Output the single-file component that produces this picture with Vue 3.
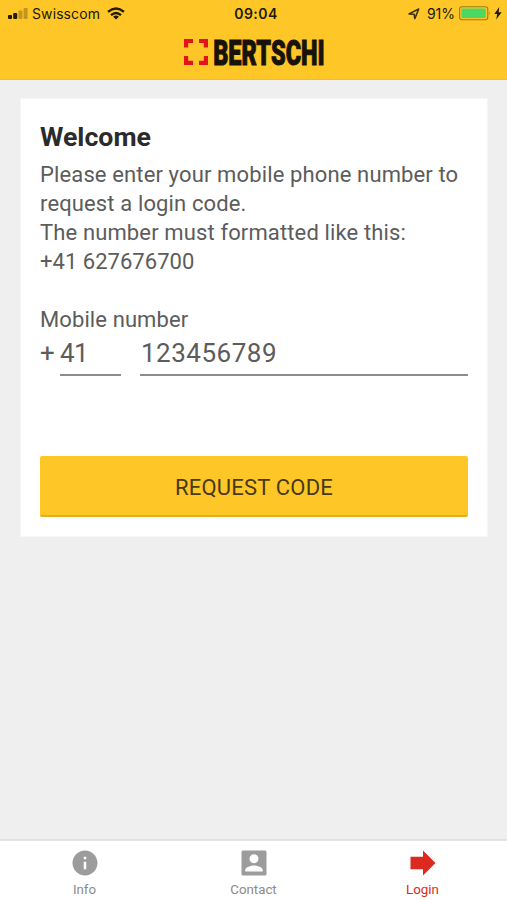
<template>
  <div class="app">
    <header class="header">
      <div class="status">
        <div class="side">
          <svg class="signal" width="20" height="12" viewBox="0 0 20 12">
            <rect x="0" y="7" width="4" height="4" rx="1" fill="#211a05" />
            <rect x="5.2" y="5" width="4" height="6" rx="1" fill="#211a05" />
            <rect x="10.4" y="2.5" width="4" height="8.5" rx="1" fill="#211a05" opacity=".28" />
            <rect x="15.6" y="0" width="4" height="11" rx="1" fill="#211a05" opacity=".28" />
          </svg>
          <span class="carrier">Swisscom</span>
          <svg class="wifi" width="18" height="13" viewBox="0 0 18 13" fill="none" stroke="#211a05" stroke-width="2.4">
            <path d="M1 4.8Q9-2 17 4.8" />
            <path d="M4 8.2Q9 3.8 14 8.2" />
            <path d="M6.1 9.7Q9 7.4 11.9 9.7L9 12.5Z" fill="#211a05" stroke="none" />
          </svg>
        </div>
        <span class="time">09:04</span>
        <div class="side right">
          <svg class="location" width="12" height="12" viewBox="0 0 12 12">
            <path d="M1 5.9L10.7 1L6.8 10.6L6.1 6.2Z" fill="none" stroke="#3d300a" stroke-width="1.5" stroke-linejoin="round" />
          </svg>
          <span class="percent">91%</span>
          <svg width="32" height="15" viewBox="0 0 32 15">
            <rect x=".6" y=".8" width="28.2" height="13" rx="2.5" fill="none" stroke="#a37a14" stroke-width="1.1" />
            <rect x="2.4" y="2.6" width="24.4" height="9.4" rx="1" fill="#4bd964" />
            <path d="M30 5.2Q31.8 7.3 30 9.4Z" fill="#a37a14" />
          </svg>
          <svg class="bolt" width="8" height="13" viewBox="0 0 8 13">
            <path d="M5.3 0L.3 7H3.2L2.2 12.5L7.6 5.2H4.6Z" fill="#211a05" />
          </svg>
        </div>
      </div>
      <div class="brand">
        <svg width="150" height="50" viewBox="-4 -10 150 50">
          <g fill="#e2141b">
            <path d="M0 2H9V6H4.2V10.5H0Z" />
            <path d="M15 2H24V10.5H19.8V6H15Z" />
            <path d="M0 19H4.2V23.8H9V28H0Z" />
            <path d="M19.8 19H24V28H15V23.8H19.8Z" />
          </g>
          <text class="logo-text" x="29.2" y="27.8" textLength="111.5" lengthAdjust="spacingAndGlyphs">BERTSCHI</text>
        </svg>
      </div>
    </header>

    <main class="content">
      <form class="card" @submit.prevent>
        <h1>Welcome</h1>
        <p class="intro">
          Please enter your mobile phone number to request a login code.<br />
          The number must formatted like this:<br />
          <span class="sample">+41 627676700</span>
        </p>

        <label class="label" for="mobile">Mobile number</label>
        <div class="phone">
          <span class="plus">+</span>
          <input v-model="prefix" class="prefix" type="text" />
          <input id="mobile" v-model="mobile" class="mobile" type="text" />
        </div>

        <button type="submit">REQUEST CODE</button>
      </form>
    </main>

    <nav class="tabs">
      <a v-for="t in tabs" :key="t.name" class="tab" :class="{ active: t.name === active }" @click="active = t.name">
        <svg width="30" height="30" viewBox="0 0 24 24" fill="currentColor">
          <path :d="t.icon" />
        </svg>
        <span>{{ t.name }}</span>
      </a>
    </nav>
  </div>
</template>

<script setup>
import { ref } from 'vue'

const prefix = ref('41')
const mobile = ref('123456789')
const active = ref('Login')

const tabs = [
  {
    name: 'Info',
    icon: 'M12 2C6.48 2 2 6.48 2 12s4.48 10 10 10 10-4.48 10-10S17.52 2 12 2zm1 15h-2v-6h2v6zm0-8h-2V7h2v2z'
  },
  {
    name: 'Contact',
    icon: 'M3.2 2H20.8Q22 2 22 3.2V20.8Q22 22 20.8 22H3.2Q2 22 2 20.8V3.2Q2 2 3.2 2ZM12 5a3.6 3.6 0 1 0 0 7.2A3.6 3.6 0 0 0 12 5ZM5 18.8H19V17.5C19 15.1 14.3 13.9 12 13.9S5 15.1 5 17.5Z'
  },
  {
    name: 'Login',
    icon: 'M2 7H12V2L22 12L12 22V17H2Z'
  }
]
</script>

<style>
body { background: #efefef; }
</style>

<style scoped>
.app {
  display: flex;
  flex-direction: column;
  height: 900px;
  background: #efefef;
  color: #5c5c5c;
  font-family: Roboto, "Liberation Sans", sans-serif;
}
.header {
  box-sizing: border-box;
  height: 80px;
  background: #ffc627;
  border-bottom: 1px solid #e1bd57;
}
.status {
  display: grid;
  grid-template-columns: 1fr auto 1fr;
  align-items: center;
  height: 27px;
  padding: 0 5px 0 8px;
  color: #211a05;
  font-family: Inter, sans-serif;
  font-size: 14px;
}
.side { display: flex; align-items: center; }
.side.right { justify-content: flex-end; }
.carrier { margin: 0 7px 0 4px; letter-spacing: .1px; }
.time { padding-left: 2px; font-weight: 600; letter-spacing: .5px; }
.location { margin-right: 7px; }
.percent { margin-right: 4px; }
.bolt { margin-left: 3px; }
.brand { display: flex; justify-content: center; padding-left: 2px; }
.logo-text {
  fill: #17130a;
  stroke: #17130a;
  stroke-width: 1px;
  font-family: Roboto, sans-serif;
  font-size: 35.5px;
  font-weight: 900;
}

.content { flex: 1; padding: 18px 19px 0 20px; }
.card {
  box-sizing: border-box;
  height: 439px;
  padding: 23px 19px 0;
  background: #fff;
  border: 1px solid #f6f6f6;
}
h1 {
  margin: 0;
  color: #2b2b2b;
  font-size: 26.7px;
  font-weight: 700;
  line-height: 30px;
}
.intro { margin: 8px 0 0; font-size: 22px; letter-spacing: .13px; line-height: 29px; }
.sample { letter-spacing: .03px; }
.label { display: block; margin-top: 29px; font-size: 22px; letter-spacing: .1px; line-height: 30px; }
.phone { display: flex; padding-top: 1px; }
.plus { width: 20px; font-size: 26px; line-height: 34px; }
input {
  box-sizing: border-box;
  height: 40px;
  padding: 0 0 4px;
  border: none;
  border-bottom: 2px solid #8d8d8d;
  background: none;
  color: #5c5c5c;
  font-family: inherit;
  font-size: 26px;
  letter-spacing: .5px;
  outline: none;
}
.prefix { width: 61px; margin-right: 19px; letter-spacing: -.5px; }
.mobile { flex: 1; min-width: 0; padding-left: 1px; }
button {
  display: block;
  width: 100%;
  height: 61px;
  margin-top: 80px;
  padding: 3px 0 0;
  border: none;
  border-bottom: 2px solid #e5ac1c;
  border-radius: 2px;
  background: #ffc627;
  color: #483a16;
  font-family: inherit;
  font-size: 22px;
  letter-spacing: .2px;
}

.tabs {
  display: flex;
  box-sizing: border-box;
  height: 61px;
  background: #fff;
  border-top: 2px solid #e2e2e2;
}
.tab {
  display: flex;
  flex: 1;
  flex-direction: column;
  align-items: center;
  padding-top: 7px;
  color: #8b8b8b;
  font-size: 13.3px;
  line-height: 16px;
}
.tab svg { margin-bottom: 4px; color: #9c9c9c; }
.tab.active, .tab.active svg { color: #dc2a20; }
</style>
